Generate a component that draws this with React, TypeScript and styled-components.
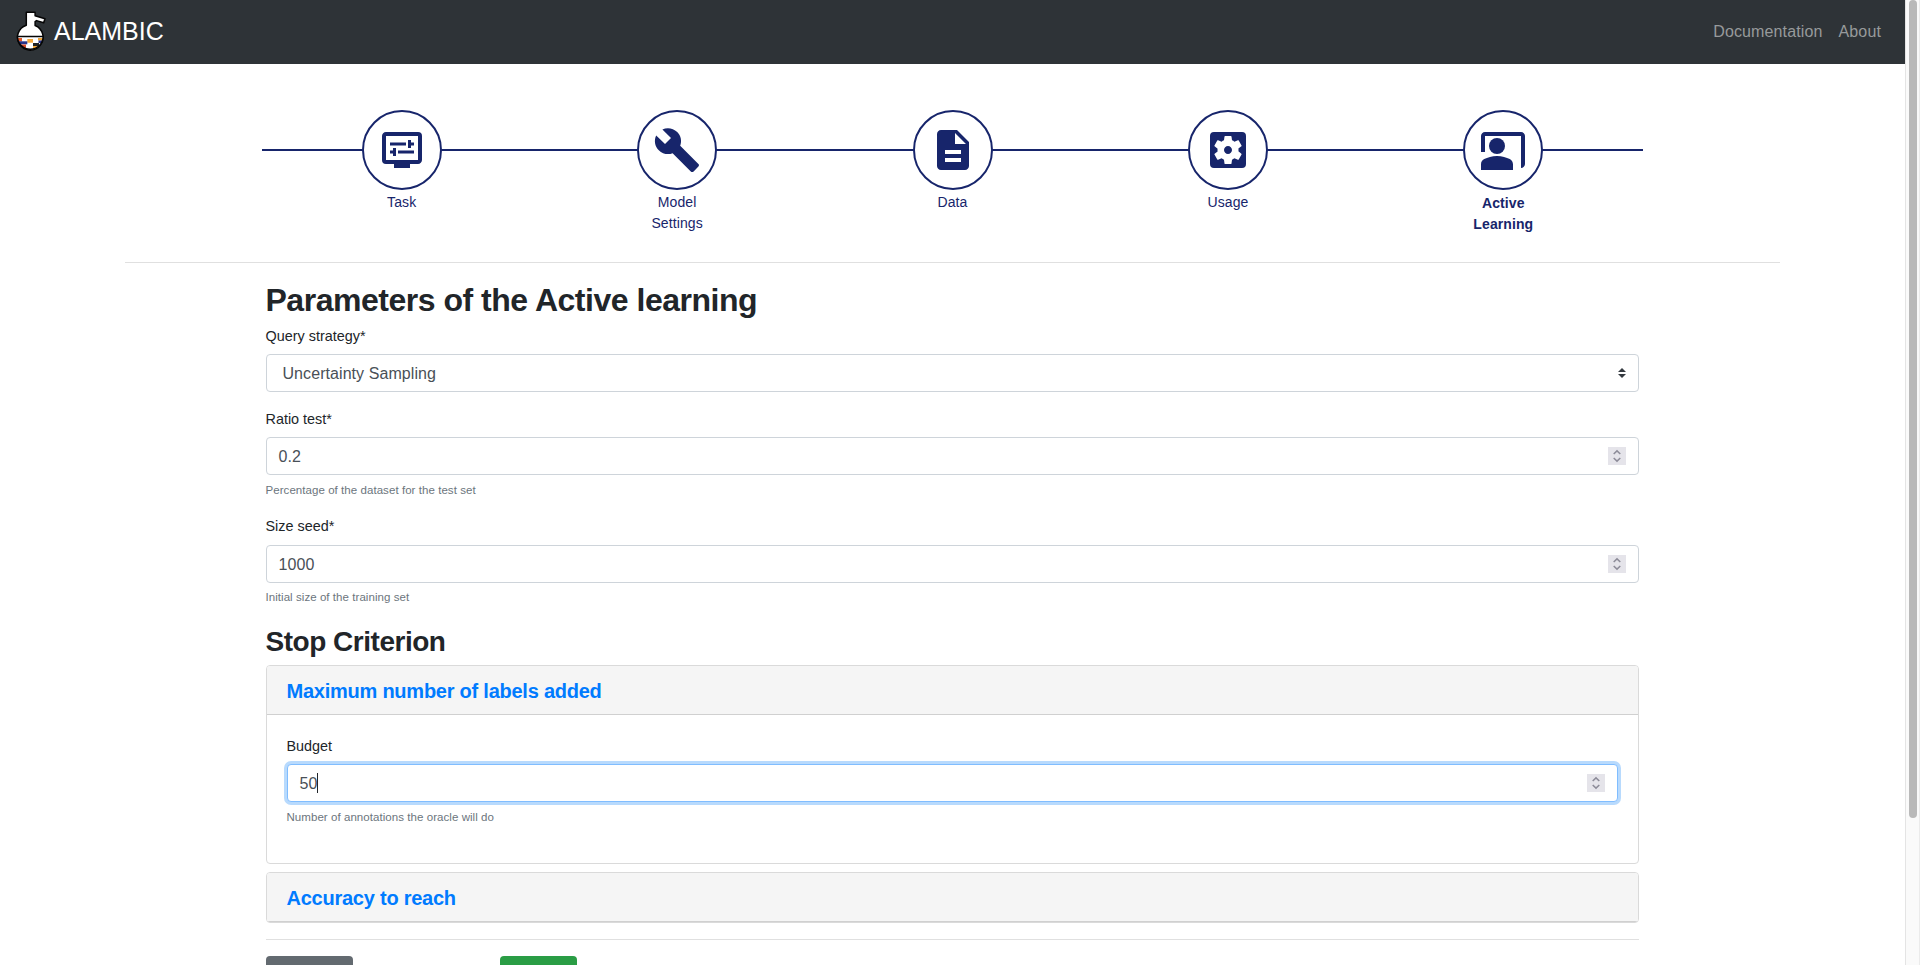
import React from "react";
import styled, { createGlobalStyle } from "styled-components";
import {
  MdBuild,
  MdCoPresent,
  MdDescription,
  MdDisplaySettings,
  MdSettingsApplications,
} from "react-icons/md";

const Global = createGlobalStyle`
  *, *::before, *::after { box-sizing: border-box; }
  body {
    margin: 0;
    background: #fff;
    color: #212529;
    font-family: "Liberation Sans", Arial, sans-serif;
    font-size: 14.4px;
    line-height: 1.5;
  }
`;

const Window = styled.div`
  display: flex;
  height: 965px;
  overflow: hidden;
`;
const Page = styled.div`
  flex: 1;
  min-width: 0;
`;
const ScrollTrack = styled.div`
  width: 15px;
  padding-left: 3px;
  background: #fafafa;
  border-left: 1px solid #e4e4e4;
  border-right: 1px solid #ebebeb;
`;
const ScrollThumb = styled.div`
  width: 8px;
  height: 818px;
  border-radius: 4px;
  background: #b9b9b9;
`;

const Navbar = styled.header`
  display: flex;
  align-items: center;
  justify-content: space-between;
  height: 64px;
  padding: 0 24px 0 16px;
  background: #2e3337;
`;
const Brand = styled.div`
  display: flex;
  align-items: center;
  gap: 7px;
  color: #fff;
  font-size: 25px;
  line-height: 38px;
  padding-bottom: 2px;
`;
const NavLinks = styled.nav`
  display: flex;
  gap: 16px;
`;
const NavLink = styled.a`
  color: #979a9b;
  font-size: 16px;
  letter-spacing: 0.13px;
`;

const Container = styled.main`
  width: 1655px;
  margin: 0 auto;
`;
const StepperArea = styled.section`
  height: 199px;
  padding-top: 46px;
  border-bottom: 1px solid #e0e0e0;
`;
const Stepper = styled.div`
  display: flex;
  width: 1381px;
  margin: 0 auto;
  padding: 0 2px;
  background: linear-gradient(#17256b, #17256b) 0 39px / 100% 2px no-repeat;
`;
const Step = styled.div<{ $active?: boolean }>`
  flex: 1;
  display: flex;
  flex-direction: column;
  align-items: center;
  color: #17256b;
  text-align: center;
  font-size: 14px;
  line-height: 21px;
  letter-spacing: 0.1px;
  font-weight: ${(p) => (p.$active ? 700 : 400)};
`;
const StepCircle = styled.div`
  display: flex;
  align-items: center;
  justify-content: center;
  width: 80px;
  height: 80px;
  border: 2px solid #17256b;
  border-radius: 50%;
  background: #fff;
`;
const StepLabel = styled.span<{ $active?: boolean }>`
  width: 80px;
  padding-top: ${(p) => (p.$active ? 3 : 2)}px;
`;

const Form = styled.form`
  width: 1373px;
  margin-left: 140.5px;
`;
const Title = styled.h2`
  margin: 0;
  padding-top: 16px;
  height: 58px;
  font-size: 32px;
  line-height: 42px;
  font-weight: 700;
  letter-spacing: -0.48px;
`;
const SubTitle = styled.h3`
  margin: 0;
  padding-top: 19px;
  height: 59px;
  font-size: 28px;
  line-height: 34px;
  font-weight: 700;
  letter-spacing: -0.48px;
`;
const Label = styled.label<{ $top: number; $gap?: number }>`
  display: block;
  padding-top: ${(p) => p.$top}px;
  height: ${(p) => p.$top + (p.$gap ?? 7) + 22}px;
  line-height: 22px;
`;
const Control = styled.div<{ $focus?: boolean; $select?: boolean }>`
  display: flex;
  align-items: center;
  justify-content: space-between;
  height: 38px;
  padding: 0 12px 0 ${(p) => (p.$select ? 16 : 12)}px;
  border: 1px solid ${(p) => (p.$focus ? "#80bdff" : "#ced4da")};
  border-radius: 4px;
  box-shadow: ${(p) => (p.$focus ? "0 0 0 3px #b8dafd" : "none")};
  background: #fff;
  color: #495057;
  font-size: 16px;
  letter-spacing: 0.07px;
`;
const Value = styled.span<{ $caret?: boolean }>`
  height: 20px;
  line-height: 22px;
  border-right: ${(p) => (p.$caret ? "1px solid #212529" : "0")};
`;
const Spin = styled.span`
  display: flex;
  width: 18px;
  height: 18px;
  background: #e5e4ea;
`;
const Help = styled.small<{ $top?: number }>`
  display: block;
  padding-top: ${(p) => p.$top ?? 6}px;
  font-size: 11.52px;
  line-height: 18px;
  letter-spacing: 0.05px;
  color: #6c757d;
`;

const Card = styled.section<{ $h: number }>`
  height: ${(p) => p.$h}px;
  margin-bottom: 8px;
  border: 1px solid #dadada;
  border-radius: 4px;
  overflow: hidden;
`;
const CardHeader = styled.div`
  height: 49px;
  padding: 12px 20px 0;
  background: #f5f5f5;
  border-bottom: 1px solid #d0d0d0;
  color: #007bff;
  font-size: 20px;
  line-height: 26px;
  font-weight: 700;
  letter-spacing: -0.24px;
`;
const CardBody = styled.div`
  padding: 0 20px;
`;
const Actions = styled.div`
  display: flex;
  margin-top: 16px;
  padding-top: 16px;
  border-top: 1px solid #e0e0e0;
`;
const ActionSlot = styled.div`
  width: 234px;
`;
const Button = styled.button<{ $w: number; $color: string }>`
  display: block;
  width: ${(p) => p.$w}px;
  height: 38px;
  border: 0;
  border-radius: 4px;
  background: ${(p) => p.$color};
`;

const Logo = () => (
  <svg width="31" height="42" viewBox="0 0 31 42">
    <defs>
      <clipPath id="liquid">
        <path d="M1.500 26.500H27.100A12.800 12.800 0 0 1 1.500 26.500Z" />
      </clipPath>
    </defs>
    <path
      d="M10.300 2.300h8.800v3.500l9.900 3-1.300 4-7.200-2.200-1.400 1V15.500A12.800 12.800 0 1 1 10.300 15.200Z"
      fill="#fff"
      stroke="#050505"
      strokeWidth="1.500"
      strokeLinejoin="round"
    />
    <g clipPath="url(#liquid)">
      <rect x="1" y="26" width="28" height="15" fill="#fff" />
      <rect x="2" y="28" width="4" height="3.500" fill="#e2592c" />
      <rect x="11.300" y="29" width="5.700" height="3.700" fill="#f5a83a" />
      <rect x="22" y="28" width="6" height="2.500" fill="#e9a33c" />
      <rect x="3" y="31.300" width="8.300" height="3" fill="#27348b" />
      <rect x="22.500" y="30.500" width="4.500" height="2.500" fill="#27348b" />
      <rect x="17" y="33" width="6" height="3.500" fill="#222" />
      <rect x="5" y="34.500" width="5" height="3.500" fill="#d94a2b" />
      <rect x="17" y="36" width="4.500" height="3" fill="#f5a83a" />
    </g>
    <path
      d="M1.500 26.500H27.100A12.800 12.800 0 0 1 1.500 26.500Z"
      fill="none"
      stroke="#050505"
      strokeWidth="1.400"
    />
  </svg>
);

const SelectArrows = () => (
  <svg width="8" height="10" viewBox="0 0 8 10" fill="#343a40">
    <path d="M4 0 0 4h8ZM4 10 0 6h8Z" />
  </svg>
);

const Spinner = () => (
  <Spin>
    <svg width="18" height="18" viewBox="0 0 18 18" fill="none" stroke="#8d8c99" strokeWidth="1.500">
      <path d="M5.700 7 9 3.900 12.300 7M5.700 11 9 14.100 12.300 11" />
    </svg>
  </Spin>
);

const steps = [
  { label: "Task", Icon: MdDisplaySettings },
  { label: "Model Settings", Icon: MdBuild },
  { label: "Data", Icon: MdDescription },
  { label: "Usage", Icon: MdSettingsApplications },
  { label: "Active Learning", Icon: MdCoPresent, active: true },
];

export default function App() {
  return (
    <Window>
      <Global />
      <Page>
        <Navbar>
          <Brand>
            <Logo />
            ALAMBIC
          </Brand>
          <NavLinks>
            <NavLink>Documentation</NavLink>
            <NavLink>About</NavLink>
          </NavLinks>
        </Navbar>
        <Container>
          <StepperArea>
            <Stepper>
              {steps.map(({ label, Icon, active }) => (
                <Step key={label} $active={active}>
                  <StepCircle>
                    <Icon size={48} />
                  </StepCircle>
                  <StepLabel $active={active}>{label}</StepLabel>
                </Step>
              ))}
            </Stepper>
          </StepperArea>
          <Form>
            <Title>Parameters of the Active learning</Title>
            <Label $top={4}>Query strategy*</Label>
            <Control $select>
              <Value>Uncertainty Sampling</Value>
              <SelectArrows />
            </Control>
            <Label $top={16}>Ratio test*</Label>
            <Control>
              <Value>0.2</Value>
              <Spinner />
            </Control>
            <Help>Percentage of the dataset for the test set</Help>
            <Label $top={16} $gap={8}>Size seed*</Label>
            <Control>
              <Value>1000</Value>
              <Spinner />
            </Control>
            <Help $top={5}>Initial size of the training set</Help>
            <SubTitle>Stop Criterion</SubTitle>
            <Card $h={199}>
              <CardHeader>Maximum number of labels added</CardHeader>
              <CardBody>
                <Label $top={20}>Budget</Label>
                <Control $focus>
                  <Value $caret>50</Value>
                  <Spinner />
                </Control>
                <Help>Number of annotations the oracle will do</Help>
              </CardBody>
            </Card>
            <Card $h={51}>
              <CardHeader>Accuracy to reach</CardHeader>
            </Card>
            <Actions>
              <ActionSlot>
                <Button type="button" $w={87} $color="#636a70" />
              </ActionSlot>
              <ActionSlot>
                <Button type="button" $w={77} $color="#2a9d45" />
              </ActionSlot>
            </Actions>
          </Form>
        </Container>
      </Page>
      <ScrollTrack>
        <ScrollThumb />
      </ScrollTrack>
    </Window>
  );
}
